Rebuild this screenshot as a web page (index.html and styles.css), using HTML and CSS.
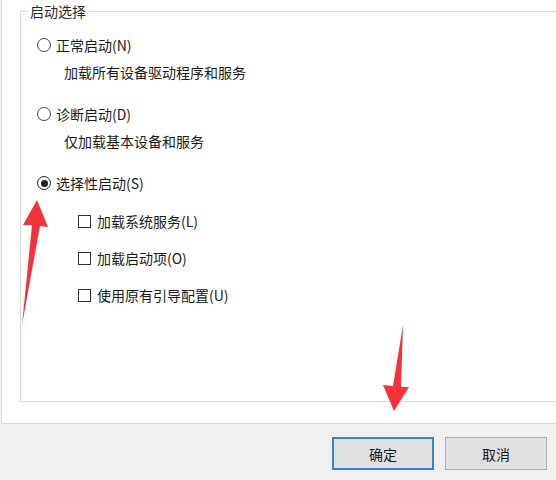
FILE: index.html
```html
<!DOCTYPE html>
<html lang="zh-CN">
    <head>
        <meta charset="UTF-8">
        <meta name="viewport" content="width=device-width, initial-scale=1.0">
        <link rel="stylesheet" href="styles.css">
        <title>系统配置</title>
    </head>
    <body>

        <div class="tab-page">
            <fieldset class="group">
                <legend>启动选择</legend>
                <div class="choices">

                    <div class="choice">
                        <label class="option"><span class="radio"></span>正常启动(N)</label>
                        <div class="desc">加载所有设备驱动程序和服务</div>
                    </div>

                    <div class="choice">
                        <label class="option"><span class="radio"></span>诊断启动(D)</label>
                        <div class="desc">仅加载基本设备和服务</div>
                    </div>

                    <div class="choice">
                        <label class="option"><span class="radio checked"></span>选择性启动(S)</label>
                        <div class="sub-options">
                            <label class="option"><span class="check"></span>加载系统服务(L)</label>
                            <label class="option"><span class="check"></span>加载启动项(O)</label>
                            <label class="option"><span class="check"></span>使用原有引导配置(U)</label>
                        </div>
                    </div>

                </div>
            </fieldset>
        </div>

        <div class="button-bar">
            <button class="btn default">确定</button>
            <button class="btn">取消</button>
        </div>

        <!-- red hint arrows drawn on top of the dialog -->
        <svg class="marks" width="556" height="480" viewBox="0 0 556 480">
            <polygon points="37,200 48,227 40,226 22,325 32,225 23,225" fill="#f2333b"/>
            <polygon points="403,325 401,387 409,387 394,411 383,385 393,386" fill="#f2333b"/>
        </svg>

    </body>
</html>
```

FILE: styles.css
```css
body {
    font-family: "Noto Sans CJK SC", "Microsoft YaHei", sans-serif;
    font-size: 14px;
    color: #1a1a1a;
    background: #f0f0f0;
    margin: 0;
    width: 556px;
    height: 480px;
    overflow: hidden;
    position: relative;
}

.tab-page {
    background: #fff;
    margin-left: 1px;
    border-left: 1px solid #dadada;
    border-bottom: 1px solid #dadada;
    padding: 0 0 21px 18px;
    overflow: hidden;
}

.group {
    margin: 0 -10px 0 0;
    padding: 0;
    border: 1px solid #dcdcdc;
    min-width: 0;
}

.group legend {
    margin-left: 7px;
    padding: 0 2px;
    line-height: 22px;
    color: #2a2a2a;
}

.choices {
    height: 379px;
    box-sizing: border-box;
    padding: 13px 0 0 16px;
    display: flex;
    flex-direction: column;
}

.choice + .choice {
    margin-top: 22px;
}

.option {
    display: flex;
    align-items: center;
    height: 20px;
    line-height: 20px;
}

.radio {
    width: 12px;
    height: 12px;
    border: 1px solid #444;
    border-radius: 50%;
    margin-right: 5px;
    display: flex;
    align-items: center;
    justify-content: center;
}

.radio.checked {
    border-color: #222;
}

.radio.checked::after {
    content: "";
    width: 7px;
    height: 7px;
    border-radius: 50%;
    background: #222;
}

.desc {
    margin-top: 7px;
    padding-left: 27px;
    line-height: 20px;
}

.sub-options {
    margin-top: 18px;
    padding-left: 41px;
    display: flex;
    flex-direction: column;
    gap: 17px;
}

.check {
    width: 11px;
    height: 11px;
    border: 1px solid #333;
    margin-right: 6px;
}

.button-bar {
    display: flex;
    justify-content: flex-end;
    gap: 11px;
    padding: 13px 9px 0 0;
}

.btn {
    width: 102px;
    height: 33px;
    font-family: inherit;
    font-size: 14px;
    color: #1a1a1a;
    background: #e1e1e1;
    border: 1px solid #adadad;
    padding: 0;
}

.btn.default {
    border: 2px solid #2e86d6;
}

.marks {
    position: absolute;
    left: 0;
    top: 0;
    pointer-events: none;
}
```
